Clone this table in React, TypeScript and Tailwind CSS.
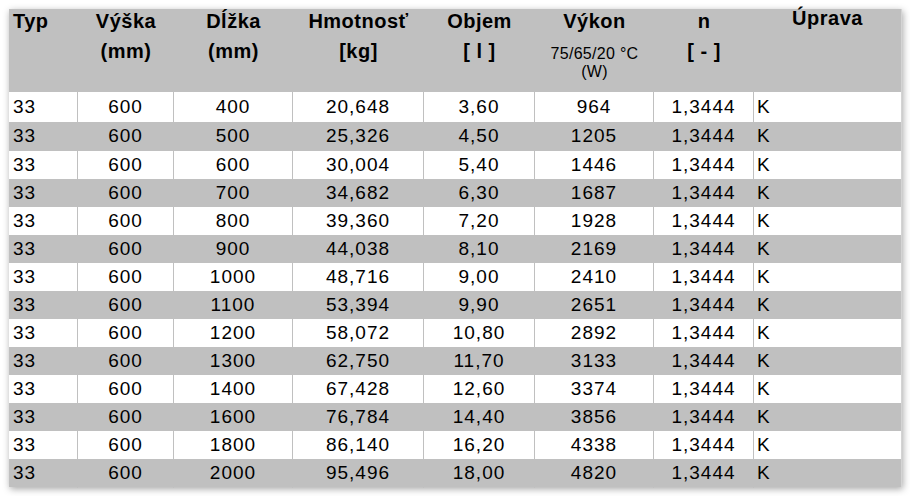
import React from "react";

const rows: [string, string, string, string, string][] = [
  ["400", "20,648", "3,60", "964", "K"],
  ["500", "25,326", "4,50", "1205", "K"],
  ["600", "30,004", "5,40", "1446", "K"],
  ["700", "34,682", "6,30", "1687", "K"],
  ["800", "39,360", "7,20", "1928", "K"],
  ["900", "44,038", "8,10", "2169", "K"],
  ["1000", "48,716", "9,00", "2410", "K"],
  ["1100", "53,394", "9,90", "2651", "K"],
  ["1200", "58,072", "10,80", "2892", "K"],
  ["1300", "62,750", "11,70", "3133", "K"],
  ["1400", "67,428", "12,60", "3374", "K"],
  ["1600", "76,784", "14,40", "3856", "K"],
  ["1800", "86,140", "16,20", "4338", "K"],
  ["2000", "95,496", "18,00", "4820", "K"],
];

const grid = "grid grid-cols-[69px_96px_119px_131px_111px_119px_100px_147px]";

function H({ a, b }: { a: string; b?: string }) {
  return (
    <div className="flex flex-col items-center text-center">
      <div className="leading-[25px]">{a}</div>
      {b && <div className="leading-[35px]">{b}</div>}
    </div>
  );
}

export default function App() {
  return (
    <div className="w-[910px] h-[496px] bg-white pl-[9px] pt-[9px] font-['Liberation_Sans',Arial,sans-serif] text-black">
      <div className="w-[893px] border-r border-[#d4d4d4] shadow-[1px_2px_7px_rgba(0,0,0,0.35)]">
        <div className={`${grid} h-[83px] bg-[#c0c0c0] text-[20px] font-bold tracking-[0.5px]`}>
          <div className="pl-[4px] leading-[25px]">Typ</div>
          <H a="Výška" b="(mm)" />
          <H a="Dĺžka" b="(mm)" />
          <H a="Hmotnosť" b="[kg]" />
          <H a="Objem" b="[ l ]" />
          <div className="flex flex-col items-center text-center">
            <div className="leading-[25px]">Výkon</div>
            <div className="mt-[11px] text-[16px] font-normal tracking-[0.3px] leading-[18px]">
              <div>75/65/20 °C</div>
              <div>(W)</div>
            </div>
          </div>
          <H a="n" b="[ - ]" />
          <div className="text-center leading-[19px]">Úprava</div>
        </div>
        {rows.map((r, i) => {
          const h = i === 0 ? "h-[30px]" : i === 1 ? "h-[29px]" : "h-[28px]";
          const bg = i % 2 === 0 ? "bg-white" : "bg-[#c0c0c0]";
          const cell = "flex items-center justify-center border-r border-[#c0c0c0]";
          return (
            <div key={i} className={`${grid} ${h} ${bg} text-[19px] tracking-[1px]`}>
              <div className="flex items-center pl-[4px] border-r border-[#c0c0c0]">33</div>
              <div className={cell}>600</div>
              <div className={cell}>{r[0]}</div>
              <div className={cell}>{r[1]}</div>
              <div className={cell}>{r[2]}</div>
              <div className={cell}>{r[3]}</div>
              <div className={cell}>1,3444</div>
              <div className="flex items-center pl-[3px]">{r[4]}</div>
            </div>
          );
        })}
      </div>
    </div>
  );
}
